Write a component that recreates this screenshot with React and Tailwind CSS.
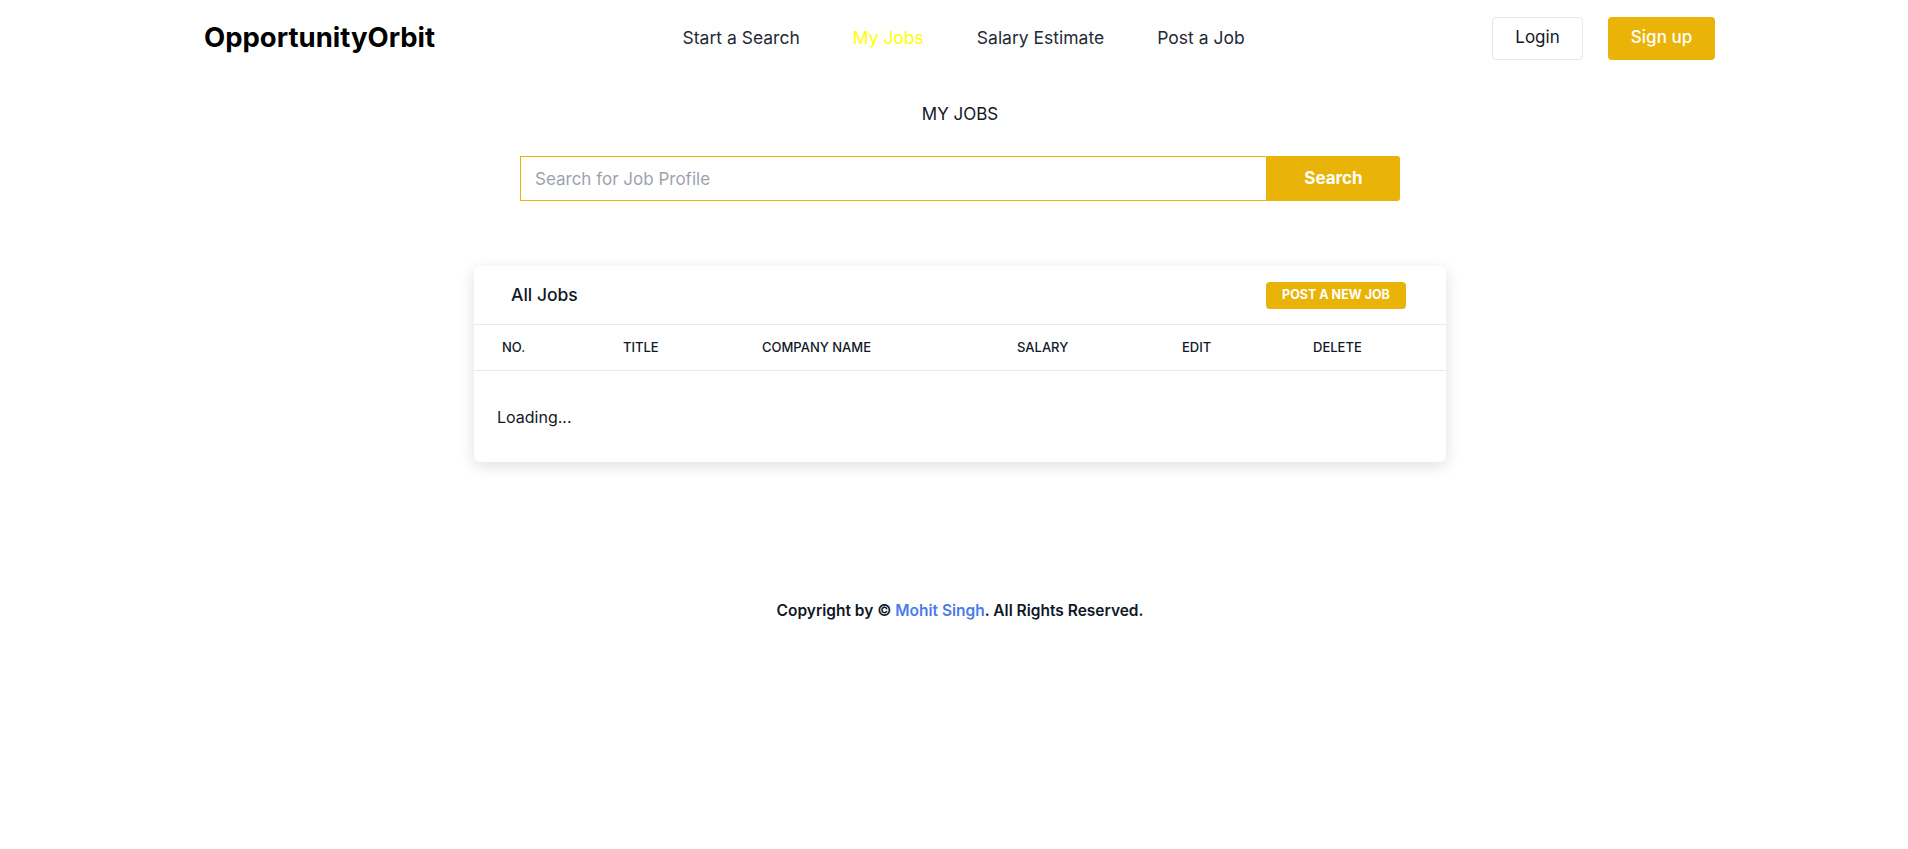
export default function App() {
  const font = { fontFamily: 'Inter, "Noto Sans", sans-serif' };
  return (
    <div className="min-h-[849px] w-full bg-white text-[#111827]" style={font}>
      <header className="flex h-[76px] items-center justify-between pl-[204px] pr-[193px]">
        <div className="text-[27.5px] font-bold tracking-[0px] text-black">OpportunityOrbit</div>
        <nav className="flex items-center gap-[53px] text-[17.5px] text-[#1f2937]">
          <a className="cursor-pointer">Start a Search</a>
          <a className="cursor-pointer text-[#ffff00]">My Jobs</a>
          <a className="cursor-pointer">Salary Estimate</a>
          <a className="cursor-pointer">Post a Job</a>
        </nav>
        <div className="flex items-center gap-[25px]">
          <button className="h-[43px] w-[91px] rounded-[4px] border border-gray-200 bg-white text-[17px] text-[#111827]">
            Login
          </button>
          <button className="h-[43px] w-[107px] rounded-[4px] bg-[#eab308] text-[17px] font-medium text-white">
            Sign up
          </button>
        </div>
      </header>

      <main className="flex flex-col items-center pl-[12px]">
        <h1 className="mt-[26px] text-[17px] leading-[24px] font-normal text-[#111827]">MY JOBS</h1>

        <div className="mt-[30px] flex h-[45px] w-[880px]">
          <input
            className="h-full w-[747px] border border-[#eab308] px-[14px] text-[17px] text-gray-700 outline-none placeholder:text-[#9ca3af]"
            placeholder="Search for Job Profile"
          />
          <button className="h-full flex-1 rounded-r-[3px] bg-[#eab308] text-[17px] font-bold text-white">
            Search
          </button>
        </div>

        <section className="mt-[65px] w-[972px] rounded-[6px] bg-white shadow-[0_4px_16px_rgba(0,0,0,0.13)]">
          <div className="flex h-[59px] items-center justify-between border-b border-[#e5e7eb] pl-[37px] pr-[40px]">
            <h2 className="text-[17.5px] font-medium text-[#111827]">All Jobs</h2>
            <button className="h-[27px] w-[140px] rounded-[4px] bg-[#eab308] text-[12.5px] font-bold text-white">
              POST A NEW JOB
            </button>
          </div>
          <div className="grid h-[46px] grid-cols-[121px_139px_255px_165px_131px_1fr] items-center border-b border-[#e5e7eb] pl-[28px] text-[13px] font-medium text-[#111827]">
            <div>NO.</div>
            <div>TITLE</div>
            <div>COMPANY NAME</div>
            <div>SALARY</div>
            <div>EDIT</div>
            <div>DELETE</div>
          </div>
          <div className="flex h-[91px] items-center pl-[23px] text-[16px] text-[#111827]">Loading...</div>
        </section>

        <footer className="mt-[139px] text-[15.5px] leading-[20px] font-semibold text-[#111827]">
          Copyright by © <span className="text-[#4b7be8]">Mohit Singh</span>. All Rights Reserved.
        </footer>
      </main>
    </div>
  );
}
